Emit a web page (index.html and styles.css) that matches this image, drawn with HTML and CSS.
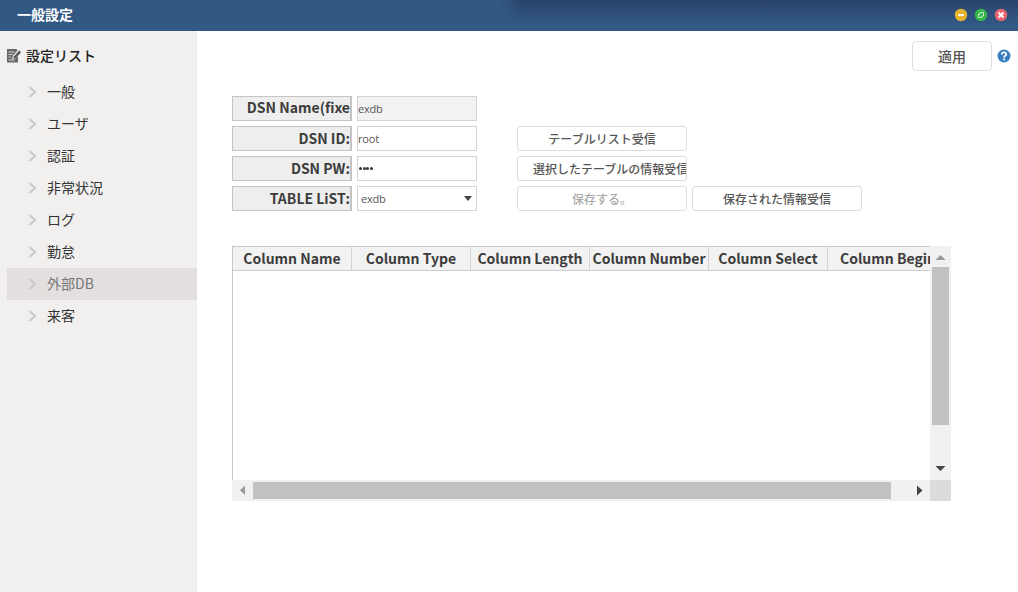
FILE: index.html
```html
<!DOCTYPE html>
<html lang="ja">
<head>
<meta charset="utf-8">
<title>一般設定</title>
<link rel="stylesheet" href="styles.css">
</head>
<body>
<header class="titlebar">
  <h1 class="title">一般設定</h1>
  <div class="controls">
    <svg class="control" viewBox="0 0 14 14"><circle cx="7" cy="7" r="6.2" fill="#e6b32c"/><path d="M4 7h6" stroke="#fff" stroke-width="1.8"/></svg>
    <svg class="control" viewBox="0 0 14 14"><circle cx="7" cy="7" r="6.2" fill="#35b54a"/><path d="M6 4.500h3.500v3.500M8 9.500h-3.500v-3.500M6 4.500v1.500h-1.500M8 9.500v-1.500h1.500" fill="none" stroke="#e4f7e6" stroke-width=".8"/></svg>
    <svg class="control" viewBox="0 0 14 14"><circle cx="7" cy="7" r="6.2" fill="#e86470"/><path d="M4.500 4.500l5 5M9.500 4.500l-5 5" stroke="#fff" stroke-width="1.8"/></svg>
  </div>
</header>
<div class="body">
  <nav class="sidebar">
    <h2 class="side-title">
      <svg class="note" viewBox="0 0 15 15"><path d="M0 1h9.500l1 1.500L6 7.500 5 11.500l3.500-1L11 8v6.500H0z" fill="#686868"/><path d="M1.500 4h6M1.500 6.500h4M1.500 9h2.500M1.500 12h6" stroke="#f1f0ef" stroke-width=".8"/><path d="M7 8.300l5.200-5.800 1.900 1.700-5.200 5.900-2.600.8z" fill="#555"/></svg>
      設定リスト
    </h2>
    <ul class="menu">
      <li class="item"><svg class="chev" viewBox="0 0 9 12"><path d="M1.500 1l5.500 5-5.500 5"/></svg>一般</li>
      <li class="item"><svg class="chev" viewBox="0 0 9 12"><path d="M1.500 1l5.500 5-5.500 5"/></svg>ユーザ</li>
      <li class="item"><svg class="chev" viewBox="0 0 9 12"><path d="M1.500 1l5.500 5-5.500 5"/></svg>認証</li>
      <li class="item"><svg class="chev" viewBox="0 0 9 12"><path d="M1.500 1l5.500 5-5.500 5"/></svg>非常状況</li>
      <li class="item"><svg class="chev" viewBox="0 0 9 12"><path d="M1.500 1l5.500 5-5.500 5"/></svg>ログ</li>
      <li class="item"><svg class="chev" viewBox="0 0 9 12"><path d="M1.500 1l5.500 5-5.500 5"/></svg>勤怠</li>
      <li class="item selected"><svg class="chev" viewBox="0 0 9 12"><path d="M1.500 1l5.500 5-5.500 5"/></svg>外部DB</li>
      <li class="item"><svg class="chev" viewBox="0 0 9 12"><path d="M1.500 1l5.500 5-5.500 5"/></svg>来客</li>
    </ul>
  </nav>
  <main class="main">
    <div class="toolbar">
      <button class="apply">適用</button>
      <svg class="help" viewBox="0 0 14 14"><circle cx="7" cy="7" r="6.500" fill="#3a7fc4"/><path d="M4.800 5.500C4.800 2.600 9.300 2.700 9.300 5.300 9.300 6.900 7.100 6.700 7.100 8.500" fill="none" stroke="#fff" stroke-width="1.700"/><path d="M6.200 9.500h1.800v1.700h-1.800z" fill="#fff"/></svg>
    </div>
    <div class="form">
      <div class="row"><div class="label clipped">DSN Name(fixe</div><div class="field readonly">exdb</div></div>
      <div class="row"><div class="label">DSN ID:</div><div class="field">root</div><button class="btn first">テーブルリスト受信</button></div>
      <div class="row"><div class="label">DSN PW:</div><div class="field password"><i class="dot"></i><i class="dot"></i><i class="dot"></i><i class="dot"></i></div><button class="btn first long">選択したテーブルの情報受信</button></div>
      <div class="row"><div class="label">TABLE LiST:</div><div class="field select">exdb<svg class="caret" viewBox="0 0 8 5"><path d="M0 0h8L4 5z"/></svg></div><button class="btn first disabled">保存する。</button><button class="btn">保存された情報受信</button></div>
    </div>
    <div class="grid">
      <div class="viewport">
        <div class="head">
          <div class="col">Column Name</div><div class="col">Column Type</div><div class="col">Column Length</div><div class="col">Column Number</div><div class="col">Column Select</div><div class="col last">Column Begin</div>
        </div>
      </div>
      <div class="vbar">
        <svg class="arrow faded" viewBox="0 0 21 21"><path d="M5.500 14L10.500 9l5 5z"/></svg>
        <div class="vthumb"></div>
        <svg class="arrow push-down" viewBox="0 0 21 21"><path d="M5.500 7h10l-5 5z"/></svg>
      </div>
      <div class="hbar">
        <svg class="arrow faded" viewBox="0 0 21 21"><path d="M13 5.500v9.500L8 10.300z"/></svg>
        <div class="hthumb"></div>
        <svg class="arrow push-right" viewBox="0 0 21 21"><path d="M8 5.500v10l5.500-5z"/></svg>
      </div>
      <div class="corner"></div>
    </div>
  </main>
</div>
</body>
</html>
```
FILE: styles.css
```css
* { box-sizing: border-box; }
body {
  margin: 0;
  height: 592px;
  overflow: hidden;
  background: #fff;
  color: #3c3c3c;
  font-family: "Noto Sans CJK JP", sans-serif;
}
button { font-family: inherit; margin: 0; }
.titlebar {
  height: 31px;
  padding: 0 10px 0 17px;
  display: flex;
  justify-content: space-between;
  align-items: center;
  background:
    linear-gradient(90deg, #325884, #325884 500px, transparent 522px),
    linear-gradient(#2a4369, #2f507c 50%, #325884 80%);
  border-bottom: 1px solid #3c557e;
}
.title { margin: 0; color: #fff; font-size: 14px; font-weight: 700; line-height: 28px; padding-bottom: 2px; }
.controls { display: flex; gap: 6px; }
.control { width: 14px; height: 14px; display: block; }
.body { display: flex; height: 561px; }
.sidebar { width: 197px; flex: none; background: #f1f0ef; padding: 12px 0 0 7px; }
.side-title {
  margin: 0;
  height: 24px;
  display: flex;
  align-items: center;
  gap: 4px;
  font-size: 14px;
  font-weight: 500;
  color: #222;
}
.note { width: 15px; height: 15px; }
.menu { list-style: none; margin: 9px 0 0; padding: 0; }
.item {
  height: 32px;
  padding-left: 21px;
  display: flex;
  align-items: flex-start;
  gap: 10px;
  font-size: 14px;
  line-height: 30px;
  color: #333;
}
.selected { background: #e2dfde; color: #777; }
.chev { width: 9px; height: 12px; margin-top: 10px; fill: none; stroke: #c8c8c8; stroke-width: 2; }
.main { flex: 1; min-width: 0; padding: 10px 7px 0 35px; }
.toolbar { display: flex; justify-content: flex-end; align-items: center; gap: 5px; height: 30px; }
.apply {
  width: 80px;
  height: 30px;
  padding: 0;
  border: 1px solid #ddd;
  border-radius: 4px;
  background: #fff;
  color: #555;
  font-size: 14px;
  font-weight: 500;
}
.help { width: 14px; height: 14px; }
.form { display: flex; flex-direction: column; gap: 5px; margin-top: 25px; }
.row { display: flex; height: 25px; }
.label {
  width: 120px;
  height: 25px;
  border: 1px solid #c4c4c4;
  border-right-width: 2px;
  background: #eee;
  font-size: 14px;
  font-weight: 700;
  line-height: 22px;
  text-align: right;
  white-space: nowrap;
  overflow: hidden;
}
.clipped { line-height: 20px; }
.field {
  width: 120px;
  height: 25px;
  margin-left: 5px;
  border: 1px solid #d3d3d3;
  background: #fff;
  color: #555;
  font: 400 11px/23px "Open Sans", sans-serif;
  letter-spacing: -.2px;
}
.readonly { background: #f2f2f2; }
.password { display: flex; align-items: center; gap: .5px; padding-left: 1px; }
.dot { width: 3px; height: 3px; border-radius: 50%; background: #333; }
.select { display: flex; align-items: center; justify-content: space-between; padding: 0 4px 0 3px; }
.caret { width: 8px; height: 5px; fill: #444; }
.btn {
  width: 170px;
  height: 25px;
  margin-left: 5px;
  padding: 0;
  border: 1px solid #ddd;
  border-radius: 3px;
  background: #fff;
  color: #555;
  font-size: 12px;
  font-weight: 500;
  line-height: 23px;
  white-space: nowrap;
  overflow: hidden;
}
.first { margin-left: 40px; }
.long { padding-left: 15px; text-align: left; }
.disabled { color: #aaa; }
.grid {
  display: grid;
  width: 719px;
  height: 255px;
  margin-top: 35px;
  grid-template-columns: 698px 21px;
  grid-template-rows: 234px 21px;
}
.viewport { overflow: hidden; border-left: 1px solid #c8c8c8; border-top: 1px solid #c8c8c8; }
.head { display: flex; width: 714px; height: 24px; background: #f2f2f2; border-bottom: 1px solid #ccc; }
.col {
  width: 119px;
  flex: none;
  border-right: 1px solid #d4d4d4;
  font-size: 14px;
  font-weight: 700;
  line-height: 22px;
  text-align: center;
  white-space: nowrap;
}
.last { padding-left: 2px; }
.vbar, .hbar { display: flex; background: #f1f1f1; }
.vbar { flex-direction: column; align-items: center; }
.hbar { align-items: center; }
.vthumb { width: 17px; height: 158px; background: #c1c1c1; }
.hthumb { width: 638px; height: 17px; background: #c1c1c1; }
.arrow { width: 21px; height: 21px; flex: none; fill: #444; }
.faded { fill: #999; }
.push-down { margin-top: auto; }
.push-right { margin-left: auto; }
.corner { background: #dcdcdc; }
```
